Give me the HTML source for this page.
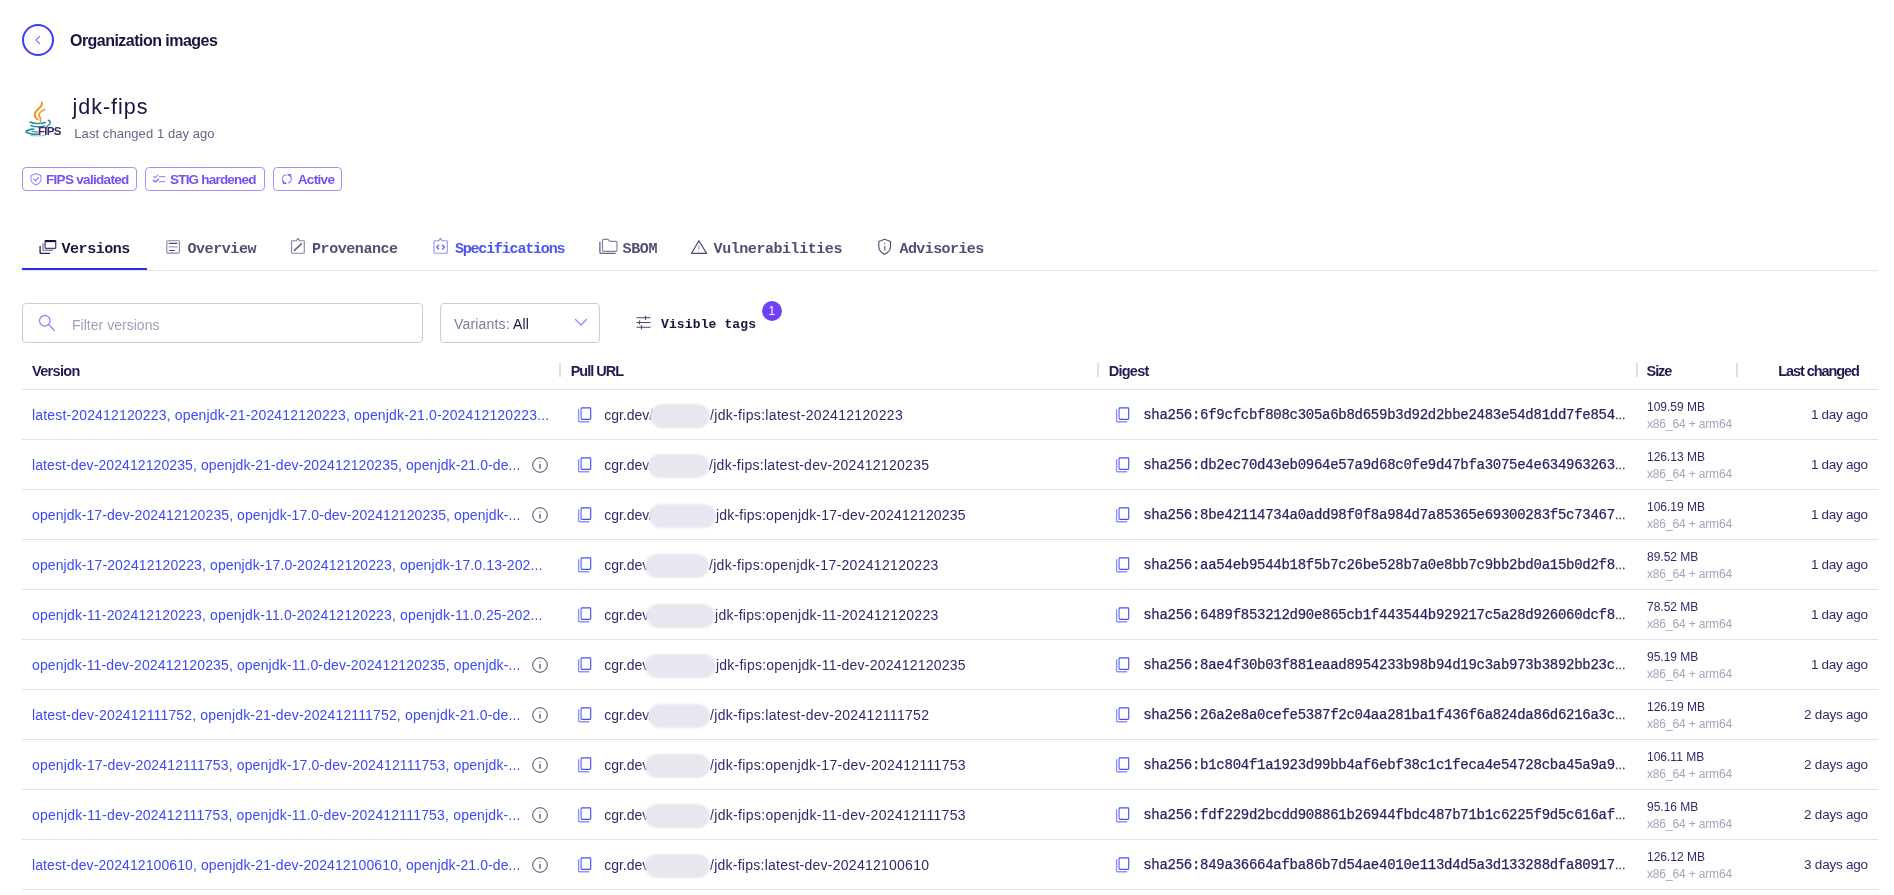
<!DOCTYPE html>
<html><head><meta charset="utf-8"><style>
html,body{margin:0;padding:0;background:#fff;}
body{width:1894px;height:895px;overflow:hidden;position:relative;font-family:'Liberation Sans', sans-serif;}
.t{position:absolute;white-space:pre;}
#w{position:absolute;left:0;top:0;width:1894px;height:895px;will-change:transform;}
svg{overflow:visible}
</style></head><body><div id="w">
<div style="position:absolute;left:22px;top:24px;width:32px;height:32px;box-sizing:border-box;border:2px solid #3a3cf6;border-radius:50%;"></div>
<svg style="position:absolute;left:32px;top:34px" width="12" height="12" viewBox="0 0 12 12" fill="none"><path d="M7.5 2.5 L4 6 L7.5 9.5" stroke="#737bf6" stroke-width="1.1" stroke-linecap="round" stroke-linejoin="round"/></svg>
<div class="t" style="left:70px;top:33.06px;font-size:16px;line-height:16px;color:#1d1240;font-weight:700;font-family:'Liberation Sans', sans-serif;letter-spacing:-0.532px;">Organization images</div>
<svg style="position:absolute;left:20px;top:96px" width="44" height="44" viewBox="0 0 44 44" fill="none">
<path d="M22 6.5 C23 10 19 12 16 15.5 C13.5 18.5 14.5 21 17.5 23.5" stroke="#f29a2e" stroke-width="2.1" fill="none" stroke-linecap="round"/>
<path d="M24.5 13.5 C21.5 15 18.5 16.5 19 19.5 C19.5 21.5 21.5 22.5 20.5 25" stroke="#f29a2e" stroke-width="1.9" fill="none" stroke-linecap="round"/>
<path d="M10 26 C13 27.8 21 28 25.5 26.5" stroke="#2a8fa6" stroke-width="1.6" fill="none" stroke-linecap="round"/>
<path d="M28.3 24.3 C31.5 25.5 30.5 28.5 26.5 30.8" stroke="#2a8fa6" stroke-width="1.5" fill="none" stroke-linecap="round"/>
<path d="M11 29.5 C14 31 20 31 24.5 30" stroke="#2a8fa6" stroke-width="1.5" fill="none" stroke-linecap="round"/>
<path d="M13.5 33.2 C10 33.5 5.5 34.5 6 35.8 C7 37.5 13 38.5 18 38.2" stroke="#2a8fa6" stroke-width="1.7" fill="none" stroke-linecap="round"/>
<path d="M12 35.5 C14 36 16 36 18 35.8" stroke="#2a8fa6" stroke-width="1.2" fill="none" stroke-linecap="round"/>
<path d="M11 39.5 C15 40 20 40 25 39.5" stroke="#7fc0cc" stroke-width="1" fill="none" stroke-linecap="round"/>
</svg>
<div class="t" style="left:38px;top:126.47px;font-size:11.5px;line-height:11.5px;color:#38286a;font-weight:700;font-family:'Liberation Sans', sans-serif;letter-spacing:-0.754px;">FIPS</div>
<div class="t" style="left:72.5px;top:97.40px;font-size:21.5px;line-height:21.5px;color:#1d1240;font-weight:400;font-family:'Liberation Sans', sans-serif;letter-spacing:0.984px;">jdk-fips</div>
<div class="t" style="left:74.3px;top:127.00px;font-size:13px;line-height:13px;color:#6a6388;font-weight:400;font-family:'Liberation Sans', sans-serif;letter-spacing:0.072px;">Last changed 1 day ago</div>
<div style="position:absolute;left:22px;top:167px;width:115px;height:24px;box-sizing:border-box;border:1px solid #a890f8;border-radius:4px;"></div>
<div class="t" style="left:46px;top:172.57px;font-size:13.5px;line-height:13.5px;color:#7450f2;font-weight:700;font-family:'Liberation Sans', sans-serif;letter-spacing:-0.691px;">FIPS validated</div>
<div style="position:absolute;left:145px;top:167px;width:120px;height:24px;box-sizing:border-box;border:1px solid #a890f8;border-radius:4px;"></div>
<div class="t" style="left:170px;top:172.57px;font-size:13.5px;line-height:13.5px;color:#7450f2;font-weight:700;font-family:'Liberation Sans', sans-serif;letter-spacing:-0.794px;">STIG hardened</div>
<div style="position:absolute;left:273px;top:167px;width:69px;height:24px;box-sizing:border-box;border:1px solid #a890f8;border-radius:4px;"></div>
<div class="t" style="left:297.7px;top:172.57px;font-size:13.5px;line-height:13.5px;color:#7450f2;font-weight:700;font-family:'Liberation Sans', sans-serif;letter-spacing:-0.646px;">Active</div>
<svg style="position:absolute;left:29px;top:172px" width="14" height="14" viewBox="0 0 14 14" fill="none"><path d="M7 1.5 L12 3.5 V7 C12 10 9.5 12 7 13 C4.5 12 2 10 2 7 V3.5 Z" stroke="#a084f8" stroke-width="1.1" stroke-linejoin="round"/><path d="M4.8 7.2 L6.5 8.8 L9.5 5.5" stroke="#8a6af6" stroke-width="1.1" stroke-linecap="round" stroke-linejoin="round"/></svg>
<svg style="position:absolute;left:152px;top:172px" width="16" height="14" viewBox="0 0 16 14" fill="none"><path d="M1.4 4.4 L3.2 5.7 L5.8 3.2" stroke="#a080f8" stroke-width="1.1" stroke-linecap="round" stroke-linejoin="round"/><path d="M1.2 8.4 L3.5 9.9 L6.5 7.3" stroke="#8a66f6" stroke-width="1.3" stroke-linecap="round" stroke-linejoin="round"/><path d="M7.4 4.6 H13 M7.4 9.6 H13" stroke="#ad95f8" stroke-width="1.1" stroke-linecap="round"/></svg>
<svg style="position:absolute;left:278px;top:170px" width="18" height="18" viewBox="0 0 18 18" fill="none"><path d="M7.9 4.9 A4.2 4.2 0 0 0 7.6 13.1" stroke="#a88cf8" stroke-width="1.2" stroke-linecap="round"/><path d="M5.2 11.2 L5.6 13.5 L8 13.2" stroke="#8060f6" stroke-width="1.3" stroke-linecap="round" stroke-linejoin="round"/><path d="M10.3 13 A4.2 4.2 0 0 0 10.3 4.9" stroke="#a88cf8" stroke-width="1.2" stroke-linecap="round"/><path d="M12.8 6.9 L12.4 4.5 L10 4.8" stroke="#8a6cf6" stroke-width="1.3" stroke-linecap="round" stroke-linejoin="round"/></svg>
<div style="position:absolute;left:22px;top:270px;width:1856px;height:1px;background:#e4e2ec;"></div>
<div style="position:absolute;left:22px;top:268px;width:125px;height:2px;background:#2433f0;"></div>
<div class="t" style="left:61.6px;top:241.81px;font-size:15px;line-height:15px;color:#1d1240;font-weight:700;font-family:'Liberation Mono', monospace;letter-spacing:-0.488px;">Versions</div>
<div class="t" style="left:187.4px;top:241.81px;font-size:15px;line-height:15px;color:#564d74;font-weight:700;font-family:'Liberation Mono', monospace;letter-spacing:-0.417px;">Overview</div>
<div class="t" style="left:312px;top:241.81px;font-size:15px;line-height:15px;color:#564d74;font-weight:700;font-family:'Liberation Mono', monospace;letter-spacing:-0.435px;">Provenance</div>
<div class="t" style="left:454.9px;top:241.81px;font-size:15px;line-height:15px;color:#4a55f3;font-weight:700;font-family:'Liberation Mono', monospace;letter-spacing:-1.187px;">Specifications</div>
<div class="t" style="left:622.6px;top:241.81px;font-size:15px;line-height:15px;color:#564d74;font-weight:700;font-family:'Liberation Mono', monospace;letter-spacing:-0.372px;">SBOM</div>
<div class="t" style="left:713.6px;top:241.81px;font-size:15px;line-height:15px;color:#564d74;font-weight:700;font-family:'Liberation Mono', monospace;letter-spacing:-0.445px;">Vulnerabilities</div>
<div class="t" style="left:899.5px;top:241.81px;font-size:15px;line-height:15px;color:#564d74;font-weight:700;font-family:'Liberation Mono', monospace;letter-spacing:-0.580px;">Advisories</div>
<svg style="position:absolute;left:36px;top:236px" width="24" height="22" viewBox="0 0 24 22" fill="none"><path d="M9.1 5 H19.7 V11.7 Q19.7 12.5 18.9 12.5 H9.9 Q9.1 12.5 9.1 11.7 Z" stroke="#4e4272" stroke-width="1.3"/><path d="M9.1 5.1 H19.7" stroke="#12073a" stroke-width="2"/><path d="M7 7.6 V13.9 Q7 14.4 7.5 14.4 H16.2" stroke="#8a80a6" stroke-width="1.3" stroke-linecap="round"/><path d="M4.1 10.3 V16.9 Q4.1 17.4 4.6 17.4 H13.5" stroke="#2a1d50" stroke-width="1.3" stroke-linecap="round"/></svg>
<svg style="position:absolute;left:162px;top:236px" width="24" height="22" viewBox="0 0 24 22" fill="none"><rect x="4.8" y="4.7" width="12.6" height="12.4" rx="1.2" stroke="#8a80a6" stroke-width="1.1"/><path d="M7.3 7.4 H15 M7.3 14.5 H12.5" stroke="#4e4470" stroke-width="1.1" stroke-linecap="round"/><path d="M7.3 10.9 H15" stroke="#a49cba" stroke-width="1.4" stroke-linecap="round"/></svg>
<svg style="position:absolute;left:286px;top:234px" width="24" height="24" viewBox="0 0 24 24" fill="none"><path d="M6.4 6.8 H10.2 L12 4.4 L13.8 6.8 H17.5 Q18.3 6.8 18.3 7.6 V18.4 Q18.3 19.2 17.5 19.2 H6.4 Q5.6 19.2 5.6 18.4 V7.6 Q5.6 6.8 6.4 6.8 Z" stroke="#8a80a6" stroke-width="1.1" stroke-linejoin="round"/><path d="M8.3 16.4 L15.5 9.7" stroke="#4e4470" stroke-width="1.3" stroke-linecap="round"/></svg>
<svg style="position:absolute;left:428px;top:234px" width="24" height="24" viewBox="0 0 24 24" fill="none"><path d="M6.8 6.8 H10.6 L12.4 4.4 L14.2 6.8 H18.5 Q19.3 6.8 19.3 7.6 V18.4 Q19.3 19.2 18.5 19.2 H6.8 Q6 19.2 6 18.4 V7.6 Q6 6.8 6.8 6.8 Z" stroke="#8c94f8" stroke-width="1.1" stroke-linejoin="round"/><path d="M10.7 11.2 L8.7 13.1 L10.7 15 M14.5 11.2 L16.5 13.1 L14.5 15" stroke="#5560f4" stroke-width="1.3" stroke-linecap="round" stroke-linejoin="round"/></svg>
<svg style="position:absolute;left:594px;top:234px" width="26" height="24" viewBox="0 0 26 24" fill="none"><path d="M8.5 6.5 Q8.5 5.4 9.6 5.4 H14 L15.8 7.3 H21.9 Q23 7.3 23 8.4 V16.2 Q23 17.3 21.9 17.3 H9.6 Q8.5 17.3 8.5 16.2 Z" stroke="#8a80a6" stroke-width="1.2" stroke-linejoin="round"/><path d="M5.9 8.2 V18.5 Q5.9 19.3 6.7 19.3 H21.2" stroke="#6a5f8c" stroke-width="1.3" stroke-linecap="round"/></svg>
<svg style="position:absolute;left:686px;top:234px" width="24" height="24" viewBox="0 0 24 24" fill="none"><path d="M12.9 6.8 L5.5 19.3 H20.5 Z" stroke="#4e4272" stroke-width="1.2" stroke-linejoin="round"/><path d="M12.8 11.3 V15.3" stroke="#9a90b4" stroke-width="1.1"/><path d="M12.3 17.4 H13.3" stroke="#9a90b4" stroke-width="1"/></svg>
<svg style="position:absolute;left:872px;top:234px" width="24" height="24" viewBox="0 0 24 24" fill="none"><path d="M12.6 5.3 L18.5 7.5 V13 C18.5 16.5 15.5 18.8 12.6 20.3 C9.7 18.8 6.8 16.5 6.8 13 V7.5 Z" stroke="#5a4f7c" stroke-width="1.2" stroke-linejoin="round"/><path d="M12.8 11.8 V16.6" stroke="#7a7096" stroke-width="1.3"/><circle cx="12.6" cy="9.4" r="0.7" fill="#7a7096"/></svg>
<div style="position:absolute;left:22px;top:303px;width:401px;height:40px;box-sizing:border-box;border:1px solid #cdc9dc;border-radius:4px;"></div>
<svg style="position:absolute;left:37px;top:313px" width="20" height="20" viewBox="0 0 20 20" fill="none"><circle cx="7.8" cy="7.8" r="5.3" stroke="#8890f8" stroke-width="1.3"/><path d="M11.8 11.8 L17.5 17.5" stroke="#8890f8" stroke-width="1.3" stroke-linecap="round"/></svg>
<div class="t" style="left:72px;top:317.65px;font-size:14px;line-height:14px;color:#a39dbb;font-weight:400;font-family:'Liberation Sans', sans-serif;letter-spacing:0.026px;">Filter versions</div>
<div style="position:absolute;left:440px;top:303px;width:160px;height:40px;box-sizing:border-box;border:1px solid #cdc9dc;border-radius:4px;"></div>
<div class="t" style="left:454px;top:317.15px;font-size:14px;line-height:14px;color:#1d1240;font-weight:400;font-family:'Liberation Sans', sans-serif;letter-spacing:0.174px;"><span style="color:#7e7899">Variants:</span> All</div>
<svg style="position:absolute;left:573px;top:316px" width="16" height="12" viewBox="0 0 16 12" fill="none"><path d="M2.5 3.5 L8 9 L13.5 3.5" stroke="#8890f8" stroke-width="1.3" stroke-linecap="round" stroke-linejoin="round"/></svg>
<svg style="position:absolute;left:635px;top:315px" width="17" height="16" viewBox="0 0 17 16" fill="none"><path d="M1.5 2.8 H15.5 M1.5 7.5 H15.5 M1.5 12.3 H15.5" stroke="#4e4470" stroke-width="1.1"/><path d="M10.5 0.8 V4.8 M4.5 5.5 V9.5 M6.5 10.3 V14.3" stroke="#4e4470" stroke-width="1.2"/></svg>
<div class="t" style="left:661px;top:317.64px;font-size:13px;line-height:13px;color:#1d1240;font-weight:700;font-family:'Liberation Mono', monospace;letter-spacing:0.125px;">Visible tags</div>
<div style="position:absolute;left:762px;top:301px;width:20px;height:20px;background:#7040f8;border-radius:50%;"></div>
<div class="t" style="left:768.6px;top:304.74px;font-size:12px;line-height:12px;color:#fff;font-weight:400;font-family:'Liberation Sans', sans-serif;font-weight:500;">1</div>
<div style="position:absolute;left:22px;top:389px;width:1856px;height:1px;background:#e3e1e8;"></div>
<div style="position:absolute;left:559px;top:363px;width:2px;height:14px;background:#e0dee8;"></div>
<div style="position:absolute;left:1097px;top:363px;width:2px;height:14px;background:#e0dee8;"></div>
<div style="position:absolute;left:1635.5px;top:363px;width:2px;height:14px;background:#e0dee8;"></div>
<div style="position:absolute;left:1736px;top:363px;width:2px;height:14px;background:#e0dee8;"></div>
<div class="t" style="left:32px;top:364.33px;font-size:14.5px;line-height:14.5px;color:#261a52;font-weight:700;font-family:'Liberation Sans', sans-serif;letter-spacing:-0.682px;">Version</div>
<div class="t" style="left:570.7px;top:364.33px;font-size:14.5px;line-height:14.5px;color:#261a52;font-weight:700;font-family:'Liberation Sans', sans-serif;letter-spacing:-1.017px;">Pull URL</div>
<div class="t" style="left:1108.7px;top:364.33px;font-size:14.5px;line-height:14.5px;color:#261a52;font-weight:700;font-family:'Liberation Sans', sans-serif;letter-spacing:-0.726px;">Digest</div>
<div class="t" style="left:1646.6px;top:364.33px;font-size:14.5px;line-height:14.5px;color:#261a52;font-weight:700;font-family:'Liberation Sans', sans-serif;letter-spacing:-1.139px;">Size</div>
<div class="t" style="left:1778.3px;top:364.33px;font-size:14.5px;line-height:14.5px;color:#261a52;font-weight:700;font-family:'Liberation Sans', sans-serif;letter-spacing:-1.088px;">Last changed</div>
<div class="t" style="left:32px;top:407.75px;font-size:14px;line-height:14px;color:#3d4af2;font-weight:400;font-family:'Liberation Sans', sans-serif;letter-spacing:0.163px;">latest-202412120223, openjdk-21-202412120223, openjdk-21.0-202412120223...</div>
<svg style="position:absolute;left:578px;top:407px" width="14" height="17" viewBox="0 0 14 17" fill="none"><path d="M0.6 2.8 V14 Q0.6 14.7 1.3 14.7 H10.7" stroke="#8e94f7" stroke-width="1.4" stroke-linecap="round"/><path d="M3.9 0.9 H12 Q12.7 0.9 12.7 1.7 V11.6 Q12.7 12.4 12 12.4 H3.9 Q3.2 12.4 3.2 11.6 V1.7 Q3.2 0.9 3.9 0.9 Z" stroke="#4452f3" stroke-width="1.15"/><path d="M3.2 2 V11.5" stroke="#9ea3f8" stroke-width="1.2"/></svg>
<div class="t" style="left:604.2px;top:407.75px;font-size:14px;line-height:14px;color:#35286a;font-weight:400;font-family:'Liberation Sans', sans-serif;">cgr.dev/</div>
<div class="t" style="left:710px;top:407.75px;font-size:14px;line-height:14px;color:#35286a;font-weight:400;font-family:'Liberation Sans', sans-serif;letter-spacing:0.322px;">/jdk-fips:latest-202412120223</div>
<div style="position:absolute;left:650px;top:403.5px;width:60px;height:24px;background:#e9e6ef;border-radius:12px;filter:blur(1.2px);"></div>
<svg style="position:absolute;left:1116px;top:407px" width="14" height="17" viewBox="0 0 14 17" fill="none"><path d="M0.6 2.8 V14 Q0.6 14.7 1.3 14.7 H10.7" stroke="#8e94f7" stroke-width="1.4" stroke-linecap="round"/><path d="M3.9 0.9 H12 Q12.7 0.9 12.7 1.7 V11.6 Q12.7 12.4 12 12.4 H3.9 Q3.2 12.4 3.2 11.6 V1.7 Q3.2 0.9 3.9 0.9 Z" stroke="#4452f3" stroke-width="1.15"/><path d="M3.2 2 V11.5" stroke="#9ea3f8" stroke-width="1.2"/></svg>
<div class="t" style="left:1143.2px;top:408.27px;font-size:14px;line-height:14px;color:#2d2260;font-weight:400;font-family:'Liberation Mono', monospace;letter-spacing:-0.270px;-webkit-text-stroke:0.25px #2d2260;">sha256:6f9cfcbf808c305a6b8d659b3d92d2bbe2483e54d81dd7fe854<span style="font-family:Liberation Sans;letter-spacing:0;font-size:11px">…</span></div>
<div class="t" style="left:1647px;top:400.74px;font-size:12px;line-height:12px;color:#35286a;font-weight:400;font-family:'Liberation Sans', sans-serif;">109.59 MB</div>
<div class="t" style="left:1647px;top:417.54px;font-size:12px;line-height:12px;color:#a7a2ba;font-weight:400;font-family:'Liberation Sans', sans-serif;letter-spacing:-0.150px;">x86_64 + arm64</div>
<div class="t" style="left:1810.9px;top:408.17px;font-size:13.5px;line-height:13.5px;color:#35286a;font-weight:400;font-family:'Liberation Sans', sans-serif;letter-spacing:-0.277px;">1 day ago</div>
<div style="position:absolute;left:22px;top:439px;width:1856px;height:1px;background:#e3e1e8;"></div>
<div class="t" style="left:32px;top:457.75px;font-size:14px;line-height:14px;color:#3d4af2;font-weight:400;font-family:'Liberation Sans', sans-serif;letter-spacing:0.093px;">latest-dev-202412120235, openjdk-21-dev-202412120235, openjdk-21.0-de...</div>
<svg style="position:absolute;left:532px;top:457px" width="16" height="16" viewBox="0 0 16 16" fill="none"><circle cx="8" cy="8" r="7.3" stroke="#4a4068" stroke-width="1"/><path d="M8 7 V11.8" stroke="#4a4068" stroke-width="1.2"/><circle cx="8" cy="4.8" r="0.6" fill="#4a4068"/></svg>
<svg style="position:absolute;left:578px;top:457px" width="14" height="17" viewBox="0 0 14 17" fill="none"><path d="M0.6 2.8 V14 Q0.6 14.7 1.3 14.7 H10.7" stroke="#8e94f7" stroke-width="1.4" stroke-linecap="round"/><path d="M3.9 0.9 H12 Q12.7 0.9 12.7 1.7 V11.6 Q12.7 12.4 12 12.4 H3.9 Q3.2 12.4 3.2 11.6 V1.7 Q3.2 0.9 3.9 0.9 Z" stroke="#4452f3" stroke-width="1.15"/><path d="M3.2 2 V11.5" stroke="#9ea3f8" stroke-width="1.2"/></svg>
<div class="t" style="left:604.2px;top:457.75px;font-size:14px;line-height:14px;color:#35286a;font-weight:400;font-family:'Liberation Sans', sans-serif;">cgr.dev/</div>
<div class="t" style="left:709px;top:457.75px;font-size:14px;line-height:14px;color:#35286a;font-weight:400;font-family:'Liberation Sans', sans-serif;letter-spacing:0.284px;">/jdk-fips:latest-dev-202412120235</div>
<div style="position:absolute;left:648px;top:453.5px;width:61px;height:24px;background:#e9e6ef;border-radius:12px;filter:blur(1.2px);"></div>
<svg style="position:absolute;left:1116px;top:457px" width="14" height="17" viewBox="0 0 14 17" fill="none"><path d="M0.6 2.8 V14 Q0.6 14.7 1.3 14.7 H10.7" stroke="#8e94f7" stroke-width="1.4" stroke-linecap="round"/><path d="M3.9 0.9 H12 Q12.7 0.9 12.7 1.7 V11.6 Q12.7 12.4 12 12.4 H3.9 Q3.2 12.4 3.2 11.6 V1.7 Q3.2 0.9 3.9 0.9 Z" stroke="#4452f3" stroke-width="1.15"/><path d="M3.2 2 V11.5" stroke="#9ea3f8" stroke-width="1.2"/></svg>
<div class="t" style="left:1143.2px;top:458.27px;font-size:14px;line-height:14px;color:#2d2260;font-weight:400;font-family:'Liberation Mono', monospace;letter-spacing:-0.270px;-webkit-text-stroke:0.25px #2d2260;">sha256:db2ec70d43eb0964e57a9d68c0fe9d47bfa3075e4e634963263<span style="font-family:Liberation Sans;letter-spacing:0;font-size:11px">…</span></div>
<div class="t" style="left:1647px;top:450.74px;font-size:12px;line-height:12px;color:#35286a;font-weight:400;font-family:'Liberation Sans', sans-serif;">126.13 MB</div>
<div class="t" style="left:1647px;top:467.54px;font-size:12px;line-height:12px;color:#a7a2ba;font-weight:400;font-family:'Liberation Sans', sans-serif;letter-spacing:-0.150px;">x86_64 + arm64</div>
<div class="t" style="left:1810.9px;top:458.17px;font-size:13.5px;line-height:13.5px;color:#35286a;font-weight:400;font-family:'Liberation Sans', sans-serif;letter-spacing:-0.277px;">1 day ago</div>
<div style="position:absolute;left:22px;top:489px;width:1856px;height:1px;background:#e3e1e8;"></div>
<div class="t" style="left:32px;top:507.75px;font-size:14px;line-height:14px;color:#3d4af2;font-weight:400;font-family:'Liberation Sans', sans-serif;letter-spacing:0.094px;">openjdk-17-dev-202412120235, openjdk-17.0-dev-202412120235, openjdk-...</div>
<svg style="position:absolute;left:532px;top:507px" width="16" height="16" viewBox="0 0 16 16" fill="none"><circle cx="8" cy="8" r="7.3" stroke="#4a4068" stroke-width="1"/><path d="M8 7 V11.8" stroke="#4a4068" stroke-width="1.2"/><circle cx="8" cy="4.8" r="0.6" fill="#4a4068"/></svg>
<svg style="position:absolute;left:578px;top:507px" width="14" height="17" viewBox="0 0 14 17" fill="none"><path d="M0.6 2.8 V14 Q0.6 14.7 1.3 14.7 H10.7" stroke="#8e94f7" stroke-width="1.4" stroke-linecap="round"/><path d="M3.9 0.9 H12 Q12.7 0.9 12.7 1.7 V11.6 Q12.7 12.4 12 12.4 H3.9 Q3.2 12.4 3.2 11.6 V1.7 Q3.2 0.9 3.9 0.9 Z" stroke="#4452f3" stroke-width="1.15"/><path d="M3.2 2 V11.5" stroke="#9ea3f8" stroke-width="1.2"/></svg>
<div class="t" style="left:604.2px;top:507.75px;font-size:14px;line-height:14px;color:#35286a;font-weight:400;font-family:'Liberation Sans', sans-serif;">cgr.dev/</div>
<div class="t" style="left:716px;top:507.75px;font-size:14px;line-height:14px;color:#35286a;font-weight:400;font-family:'Liberation Sans', sans-serif;letter-spacing:0.193px;">jdk-fips:openjdk-17-dev-202412120235</div>
<div style="position:absolute;left:649px;top:503.5px;width:67px;height:24px;background:#e9e6ef;border-radius:12px;filter:blur(1.2px);"></div>
<svg style="position:absolute;left:1116px;top:507px" width="14" height="17" viewBox="0 0 14 17" fill="none"><path d="M0.6 2.8 V14 Q0.6 14.7 1.3 14.7 H10.7" stroke="#8e94f7" stroke-width="1.4" stroke-linecap="round"/><path d="M3.9 0.9 H12 Q12.7 0.9 12.7 1.7 V11.6 Q12.7 12.4 12 12.4 H3.9 Q3.2 12.4 3.2 11.6 V1.7 Q3.2 0.9 3.9 0.9 Z" stroke="#4452f3" stroke-width="1.15"/><path d="M3.2 2 V11.5" stroke="#9ea3f8" stroke-width="1.2"/></svg>
<div class="t" style="left:1143.2px;top:508.27px;font-size:14px;line-height:14px;color:#2d2260;font-weight:400;font-family:'Liberation Mono', monospace;letter-spacing:-0.270px;-webkit-text-stroke:0.25px #2d2260;">sha256:8be42114734a0add98f0f8a984d7a85365e69300283f5c73467<span style="font-family:Liberation Sans;letter-spacing:0;font-size:11px">…</span></div>
<div class="t" style="left:1647px;top:500.74px;font-size:12px;line-height:12px;color:#35286a;font-weight:400;font-family:'Liberation Sans', sans-serif;">106.19 MB</div>
<div class="t" style="left:1647px;top:517.54px;font-size:12px;line-height:12px;color:#a7a2ba;font-weight:400;font-family:'Liberation Sans', sans-serif;letter-spacing:-0.150px;">x86_64 + arm64</div>
<div class="t" style="left:1810.9px;top:508.17px;font-size:13.5px;line-height:13.5px;color:#35286a;font-weight:400;font-family:'Liberation Sans', sans-serif;letter-spacing:-0.277px;">1 day ago</div>
<div style="position:absolute;left:22px;top:539px;width:1856px;height:1px;background:#e3e1e8;"></div>
<div class="t" style="left:32px;top:557.75px;font-size:14px;line-height:14px;color:#3d4af2;font-weight:400;font-family:'Liberation Sans', sans-serif;letter-spacing:0.114px;">openjdk-17-202412120223, openjdk-17.0-202412120223, openjdk-17.0.13-202...</div>
<svg style="position:absolute;left:578px;top:557px" width="14" height="17" viewBox="0 0 14 17" fill="none"><path d="M0.6 2.8 V14 Q0.6 14.7 1.3 14.7 H10.7" stroke="#8e94f7" stroke-width="1.4" stroke-linecap="round"/><path d="M3.9 0.9 H12 Q12.7 0.9 12.7 1.7 V11.6 Q12.7 12.4 12 12.4 H3.9 Q3.2 12.4 3.2 11.6 V1.7 Q3.2 0.9 3.9 0.9 Z" stroke="#4452f3" stroke-width="1.15"/><path d="M3.2 2 V11.5" stroke="#9ea3f8" stroke-width="1.2"/></svg>
<div class="t" style="left:604.2px;top:557.75px;font-size:14px;line-height:14px;color:#35286a;font-weight:400;font-family:'Liberation Sans', sans-serif;">cgr.dev</div>
<div class="t" style="left:709px;top:557.75px;font-size:14px;line-height:14px;color:#35286a;font-weight:400;font-family:'Liberation Sans', sans-serif;letter-spacing:0.306px;">/jdk-fips:openjdk-17-202412120223</div>
<div style="position:absolute;left:645px;top:553.5px;width:64px;height:24px;background:#e9e6ef;border-radius:12px;filter:blur(1.2px);"></div>
<svg style="position:absolute;left:1116px;top:557px" width="14" height="17" viewBox="0 0 14 17" fill="none"><path d="M0.6 2.8 V14 Q0.6 14.7 1.3 14.7 H10.7" stroke="#8e94f7" stroke-width="1.4" stroke-linecap="round"/><path d="M3.9 0.9 H12 Q12.7 0.9 12.7 1.7 V11.6 Q12.7 12.4 12 12.4 H3.9 Q3.2 12.4 3.2 11.6 V1.7 Q3.2 0.9 3.9 0.9 Z" stroke="#4452f3" stroke-width="1.15"/><path d="M3.2 2 V11.5" stroke="#9ea3f8" stroke-width="1.2"/></svg>
<div class="t" style="left:1143.2px;top:558.27px;font-size:14px;line-height:14px;color:#2d2260;font-weight:400;font-family:'Liberation Mono', monospace;letter-spacing:-0.270px;-webkit-text-stroke:0.25px #2d2260;">sha256:aa54eb9544b18f5b7c26be528b7a0e8bb7c9bb2bd0a15b0d2f8<span style="font-family:Liberation Sans;letter-spacing:0;font-size:11px">…</span></div>
<div class="t" style="left:1647px;top:550.74px;font-size:12px;line-height:12px;color:#35286a;font-weight:400;font-family:'Liberation Sans', sans-serif;">89.52 MB</div>
<div class="t" style="left:1647px;top:567.54px;font-size:12px;line-height:12px;color:#a7a2ba;font-weight:400;font-family:'Liberation Sans', sans-serif;letter-spacing:-0.150px;">x86_64 + arm64</div>
<div class="t" style="left:1810.9px;top:558.17px;font-size:13.5px;line-height:13.5px;color:#35286a;font-weight:400;font-family:'Liberation Sans', sans-serif;letter-spacing:-0.277px;">1 day ago</div>
<div style="position:absolute;left:22px;top:589px;width:1856px;height:1px;background:#e3e1e8;"></div>
<div class="t" style="left:32px;top:607.75px;font-size:14px;line-height:14px;color:#3d4af2;font-weight:400;font-family:'Liberation Sans', sans-serif;letter-spacing:0.157px;">openjdk-11-202412120223, openjdk-11.0-202412120223, openjdk-11.0.25-202...</div>
<svg style="position:absolute;left:578px;top:607px" width="14" height="17" viewBox="0 0 14 17" fill="none"><path d="M0.6 2.8 V14 Q0.6 14.7 1.3 14.7 H10.7" stroke="#8e94f7" stroke-width="1.4" stroke-linecap="round"/><path d="M3.9 0.9 H12 Q12.7 0.9 12.7 1.7 V11.6 Q12.7 12.4 12 12.4 H3.9 Q3.2 12.4 3.2 11.6 V1.7 Q3.2 0.9 3.9 0.9 Z" stroke="#4452f3" stroke-width="1.15"/><path d="M3.2 2 V11.5" stroke="#9ea3f8" stroke-width="1.2"/></svg>
<div class="t" style="left:604.2px;top:607.75px;font-size:14px;line-height:14px;color:#35286a;font-weight:400;font-family:'Liberation Sans', sans-serif;">cgr.dev</div>
<div class="t" style="left:715px;top:607.75px;font-size:14px;line-height:14px;color:#35286a;font-weight:400;font-family:'Liberation Sans', sans-serif;letter-spacing:0.281px;">jdk-fips:openjdk-11-202412120223</div>
<div style="position:absolute;left:646px;top:603.5px;width:69px;height:24px;background:#e9e6ef;border-radius:12px;filter:blur(1.2px);"></div>
<svg style="position:absolute;left:1116px;top:607px" width="14" height="17" viewBox="0 0 14 17" fill="none"><path d="M0.6 2.8 V14 Q0.6 14.7 1.3 14.7 H10.7" stroke="#8e94f7" stroke-width="1.4" stroke-linecap="round"/><path d="M3.9 0.9 H12 Q12.7 0.9 12.7 1.7 V11.6 Q12.7 12.4 12 12.4 H3.9 Q3.2 12.4 3.2 11.6 V1.7 Q3.2 0.9 3.9 0.9 Z" stroke="#4452f3" stroke-width="1.15"/><path d="M3.2 2 V11.5" stroke="#9ea3f8" stroke-width="1.2"/></svg>
<div class="t" style="left:1143.2px;top:608.27px;font-size:14px;line-height:14px;color:#2d2260;font-weight:400;font-family:'Liberation Mono', monospace;letter-spacing:-0.270px;-webkit-text-stroke:0.25px #2d2260;">sha256:6489f853212d90e865cb1f443544b929217c5a28d926060dcf8<span style="font-family:Liberation Sans;letter-spacing:0;font-size:11px">…</span></div>
<div class="t" style="left:1647px;top:600.74px;font-size:12px;line-height:12px;color:#35286a;font-weight:400;font-family:'Liberation Sans', sans-serif;">78.52 MB</div>
<div class="t" style="left:1647px;top:617.54px;font-size:12px;line-height:12px;color:#a7a2ba;font-weight:400;font-family:'Liberation Sans', sans-serif;letter-spacing:-0.150px;">x86_64 + arm64</div>
<div class="t" style="left:1810.9px;top:608.17px;font-size:13.5px;line-height:13.5px;color:#35286a;font-weight:400;font-family:'Liberation Sans', sans-serif;letter-spacing:-0.277px;">1 day ago</div>
<div style="position:absolute;left:22px;top:639px;width:1856px;height:1px;background:#e3e1e8;"></div>
<div class="t" style="left:32px;top:657.75px;font-size:14px;line-height:14px;color:#3d4af2;font-weight:400;font-family:'Liberation Sans', sans-serif;letter-spacing:0.124px;">openjdk-11-dev-202412120235, openjdk-11.0-dev-202412120235, openjdk-...</div>
<svg style="position:absolute;left:532px;top:657px" width="16" height="16" viewBox="0 0 16 16" fill="none"><circle cx="8" cy="8" r="7.3" stroke="#4a4068" stroke-width="1"/><path d="M8 7 V11.8" stroke="#4a4068" stroke-width="1.2"/><circle cx="8" cy="4.8" r="0.6" fill="#4a4068"/></svg>
<svg style="position:absolute;left:578px;top:657px" width="14" height="17" viewBox="0 0 14 17" fill="none"><path d="M0.6 2.8 V14 Q0.6 14.7 1.3 14.7 H10.7" stroke="#8e94f7" stroke-width="1.4" stroke-linecap="round"/><path d="M3.9 0.9 H12 Q12.7 0.9 12.7 1.7 V11.6 Q12.7 12.4 12 12.4 H3.9 Q3.2 12.4 3.2 11.6 V1.7 Q3.2 0.9 3.9 0.9 Z" stroke="#4452f3" stroke-width="1.15"/><path d="M3.2 2 V11.5" stroke="#9ea3f8" stroke-width="1.2"/></svg>
<div class="t" style="left:604.2px;top:657.75px;font-size:14px;line-height:14px;color:#35286a;font-weight:400;font-family:'Liberation Sans', sans-serif;">cgr.dev</div>
<div class="t" style="left:716px;top:657.75px;font-size:14px;line-height:14px;color:#35286a;font-weight:400;font-family:'Liberation Sans', sans-serif;letter-spacing:0.223px;">jdk-fips:openjdk-11-dev-202412120235</div>
<div style="position:absolute;left:645px;top:653.5px;width:71px;height:24px;background:#e9e6ef;border-radius:12px;filter:blur(1.2px);"></div>
<svg style="position:absolute;left:1116px;top:657px" width="14" height="17" viewBox="0 0 14 17" fill="none"><path d="M0.6 2.8 V14 Q0.6 14.7 1.3 14.7 H10.7" stroke="#8e94f7" stroke-width="1.4" stroke-linecap="round"/><path d="M3.9 0.9 H12 Q12.7 0.9 12.7 1.7 V11.6 Q12.7 12.4 12 12.4 H3.9 Q3.2 12.4 3.2 11.6 V1.7 Q3.2 0.9 3.9 0.9 Z" stroke="#4452f3" stroke-width="1.15"/><path d="M3.2 2 V11.5" stroke="#9ea3f8" stroke-width="1.2"/></svg>
<div class="t" style="left:1143.2px;top:658.27px;font-size:14px;line-height:14px;color:#2d2260;font-weight:400;font-family:'Liberation Mono', monospace;letter-spacing:-0.270px;-webkit-text-stroke:0.25px #2d2260;">sha256:8ae4f30b03f881eaad8954233b98b94d19c3ab973b3892bb23c<span style="font-family:Liberation Sans;letter-spacing:0;font-size:11px">…</span></div>
<div class="t" style="left:1647px;top:650.74px;font-size:12px;line-height:12px;color:#35286a;font-weight:400;font-family:'Liberation Sans', sans-serif;">95.19 MB</div>
<div class="t" style="left:1647px;top:667.54px;font-size:12px;line-height:12px;color:#a7a2ba;font-weight:400;font-family:'Liberation Sans', sans-serif;letter-spacing:-0.150px;">x86_64 + arm64</div>
<div class="t" style="left:1810.9px;top:658.17px;font-size:13.5px;line-height:13.5px;color:#35286a;font-weight:400;font-family:'Liberation Sans', sans-serif;letter-spacing:-0.277px;">1 day ago</div>
<div style="position:absolute;left:22px;top:689px;width:1856px;height:1px;background:#e3e1e8;"></div>
<div class="t" style="left:32px;top:707.75px;font-size:14px;line-height:14px;color:#3d4af2;font-weight:400;font-family:'Liberation Sans', sans-serif;letter-spacing:0.151px;">latest-dev-202412111752, openjdk-21-dev-202412111752, openjdk-21.0-de...</div>
<svg style="position:absolute;left:532px;top:707px" width="16" height="16" viewBox="0 0 16 16" fill="none"><circle cx="8" cy="8" r="7.3" stroke="#4a4068" stroke-width="1"/><path d="M8 7 V11.8" stroke="#4a4068" stroke-width="1.2"/><circle cx="8" cy="4.8" r="0.6" fill="#4a4068"/></svg>
<svg style="position:absolute;left:578px;top:707px" width="14" height="17" viewBox="0 0 14 17" fill="none"><path d="M0.6 2.8 V14 Q0.6 14.7 1.3 14.7 H10.7" stroke="#8e94f7" stroke-width="1.4" stroke-linecap="round"/><path d="M3.9 0.9 H12 Q12.7 0.9 12.7 1.7 V11.6 Q12.7 12.4 12 12.4 H3.9 Q3.2 12.4 3.2 11.6 V1.7 Q3.2 0.9 3.9 0.9 Z" stroke="#4452f3" stroke-width="1.15"/><path d="M3.2 2 V11.5" stroke="#9ea3f8" stroke-width="1.2"/></svg>
<div class="t" style="left:604.2px;top:707.75px;font-size:14px;line-height:14px;color:#35286a;font-weight:400;font-family:'Liberation Sans', sans-serif;">cgr.dev/</div>
<div class="t" style="left:710px;top:707.75px;font-size:14px;line-height:14px;color:#35286a;font-weight:400;font-family:'Liberation Sans', sans-serif;letter-spacing:0.317px;">/jdk-fips:latest-dev-202412111752</div>
<div style="position:absolute;left:648px;top:703.5px;width:62px;height:24px;background:#e9e6ef;border-radius:12px;filter:blur(1.2px);"></div>
<svg style="position:absolute;left:1116px;top:707px" width="14" height="17" viewBox="0 0 14 17" fill="none"><path d="M0.6 2.8 V14 Q0.6 14.7 1.3 14.7 H10.7" stroke="#8e94f7" stroke-width="1.4" stroke-linecap="round"/><path d="M3.9 0.9 H12 Q12.7 0.9 12.7 1.7 V11.6 Q12.7 12.4 12 12.4 H3.9 Q3.2 12.4 3.2 11.6 V1.7 Q3.2 0.9 3.9 0.9 Z" stroke="#4452f3" stroke-width="1.15"/><path d="M3.2 2 V11.5" stroke="#9ea3f8" stroke-width="1.2"/></svg>
<div class="t" style="left:1143.2px;top:708.27px;font-size:14px;line-height:14px;color:#2d2260;font-weight:400;font-family:'Liberation Mono', monospace;letter-spacing:-0.270px;-webkit-text-stroke:0.25px #2d2260;">sha256:26a2e8a0cefe5387f2c04aa281ba1f436f6a824da86d6216a3c<span style="font-family:Liberation Sans;letter-spacing:0;font-size:11px">…</span></div>
<div class="t" style="left:1647px;top:700.74px;font-size:12px;line-height:12px;color:#35286a;font-weight:400;font-family:'Liberation Sans', sans-serif;">126.19 MB</div>
<div class="t" style="left:1647px;top:717.54px;font-size:12px;line-height:12px;color:#a7a2ba;font-weight:400;font-family:'Liberation Sans', sans-serif;letter-spacing:-0.150px;">x86_64 + arm64</div>
<div class="t" style="left:1804.1px;top:708.17px;font-size:13.5px;line-height:13.5px;color:#35286a;font-weight:400;font-family:'Liberation Sans', sans-serif;letter-spacing:-0.240px;">2 days ago</div>
<div style="position:absolute;left:22px;top:739px;width:1856px;height:1px;background:#e3e1e8;"></div>
<div class="t" style="left:32px;top:757.75px;font-size:14px;line-height:14px;color:#3d4af2;font-weight:400;font-family:'Liberation Sans', sans-serif;letter-spacing:0.153px;">openjdk-17-dev-202412111753, openjdk-17.0-dev-202412111753, openjdk-...</div>
<svg style="position:absolute;left:532px;top:757px" width="16" height="16" viewBox="0 0 16 16" fill="none"><circle cx="8" cy="8" r="7.3" stroke="#4a4068" stroke-width="1"/><path d="M8 7 V11.8" stroke="#4a4068" stroke-width="1.2"/><circle cx="8" cy="4.8" r="0.6" fill="#4a4068"/></svg>
<svg style="position:absolute;left:578px;top:757px" width="14" height="17" viewBox="0 0 14 17" fill="none"><path d="M0.6 2.8 V14 Q0.6 14.7 1.3 14.7 H10.7" stroke="#8e94f7" stroke-width="1.4" stroke-linecap="round"/><path d="M3.9 0.9 H12 Q12.7 0.9 12.7 1.7 V11.6 Q12.7 12.4 12 12.4 H3.9 Q3.2 12.4 3.2 11.6 V1.7 Q3.2 0.9 3.9 0.9 Z" stroke="#4452f3" stroke-width="1.15"/><path d="M3.2 2 V11.5" stroke="#9ea3f8" stroke-width="1.2"/></svg>
<div class="t" style="left:604.2px;top:757.75px;font-size:14px;line-height:14px;color:#35286a;font-weight:400;font-family:'Liberation Sans', sans-serif;">cgr.dev</div>
<div class="t" style="left:710px;top:757.75px;font-size:14px;line-height:14px;color:#35286a;font-weight:400;font-family:'Liberation Sans', sans-serif;letter-spacing:0.304px;">/jdk-fips:openjdk-17-dev-202412111753</div>
<div style="position:absolute;left:645px;top:753.5px;width:65px;height:24px;background:#e9e6ef;border-radius:12px;filter:blur(1.2px);"></div>
<svg style="position:absolute;left:1116px;top:757px" width="14" height="17" viewBox="0 0 14 17" fill="none"><path d="M0.6 2.8 V14 Q0.6 14.7 1.3 14.7 H10.7" stroke="#8e94f7" stroke-width="1.4" stroke-linecap="round"/><path d="M3.9 0.9 H12 Q12.7 0.9 12.7 1.7 V11.6 Q12.7 12.4 12 12.4 H3.9 Q3.2 12.4 3.2 11.6 V1.7 Q3.2 0.9 3.9 0.9 Z" stroke="#4452f3" stroke-width="1.15"/><path d="M3.2 2 V11.5" stroke="#9ea3f8" stroke-width="1.2"/></svg>
<div class="t" style="left:1143.2px;top:758.27px;font-size:14px;line-height:14px;color:#2d2260;font-weight:400;font-family:'Liberation Mono', monospace;letter-spacing:-0.270px;-webkit-text-stroke:0.25px #2d2260;">sha256:b1c804f1a1923d99bb4af6ebf38c1c1feca4e54728cba45a9a9<span style="font-family:Liberation Sans;letter-spacing:0;font-size:11px">…</span></div>
<div class="t" style="left:1647px;top:750.74px;font-size:12px;line-height:12px;color:#35286a;font-weight:400;font-family:'Liberation Sans', sans-serif;">106.11 MB</div>
<div class="t" style="left:1647px;top:767.54px;font-size:12px;line-height:12px;color:#a7a2ba;font-weight:400;font-family:'Liberation Sans', sans-serif;letter-spacing:-0.150px;">x86_64 + arm64</div>
<div class="t" style="left:1804.1px;top:758.17px;font-size:13.5px;line-height:13.5px;color:#35286a;font-weight:400;font-family:'Liberation Sans', sans-serif;letter-spacing:-0.240px;">2 days ago</div>
<div style="position:absolute;left:22px;top:789px;width:1856px;height:1px;background:#e3e1e8;"></div>
<div class="t" style="left:32px;top:807.75px;font-size:14px;line-height:14px;color:#3d4af2;font-weight:400;font-family:'Liberation Sans', sans-serif;letter-spacing:0.183px;">openjdk-11-dev-202412111753, openjdk-11.0-dev-202412111753, openjdk-...</div>
<svg style="position:absolute;left:532px;top:807px" width="16" height="16" viewBox="0 0 16 16" fill="none"><circle cx="8" cy="8" r="7.3" stroke="#4a4068" stroke-width="1"/><path d="M8 7 V11.8" stroke="#4a4068" stroke-width="1.2"/><circle cx="8" cy="4.8" r="0.6" fill="#4a4068"/></svg>
<svg style="position:absolute;left:578px;top:807px" width="14" height="17" viewBox="0 0 14 17" fill="none"><path d="M0.6 2.8 V14 Q0.6 14.7 1.3 14.7 H10.7" stroke="#8e94f7" stroke-width="1.4" stroke-linecap="round"/><path d="M3.9 0.9 H12 Q12.7 0.9 12.7 1.7 V11.6 Q12.7 12.4 12 12.4 H3.9 Q3.2 12.4 3.2 11.6 V1.7 Q3.2 0.9 3.9 0.9 Z" stroke="#4452f3" stroke-width="1.15"/><path d="M3.2 2 V11.5" stroke="#9ea3f8" stroke-width="1.2"/></svg>
<div class="t" style="left:604.2px;top:807.75px;font-size:14px;line-height:14px;color:#35286a;font-weight:400;font-family:'Liberation Sans', sans-serif;">cgr.dev</div>
<div class="t" style="left:710px;top:807.75px;font-size:14px;line-height:14px;color:#35286a;font-weight:400;font-family:'Liberation Sans', sans-serif;letter-spacing:0.333px;">/jdk-fips:openjdk-11-dev-202412111753</div>
<div style="position:absolute;left:645px;top:803.5px;width:65px;height:24px;background:#e9e6ef;border-radius:12px;filter:blur(1.2px);"></div>
<svg style="position:absolute;left:1116px;top:807px" width="14" height="17" viewBox="0 0 14 17" fill="none"><path d="M0.6 2.8 V14 Q0.6 14.7 1.3 14.7 H10.7" stroke="#8e94f7" stroke-width="1.4" stroke-linecap="round"/><path d="M3.9 0.9 H12 Q12.7 0.9 12.7 1.7 V11.6 Q12.7 12.4 12 12.4 H3.9 Q3.2 12.4 3.2 11.6 V1.7 Q3.2 0.9 3.9 0.9 Z" stroke="#4452f3" stroke-width="1.15"/><path d="M3.2 2 V11.5" stroke="#9ea3f8" stroke-width="1.2"/></svg>
<div class="t" style="left:1143.2px;top:808.27px;font-size:14px;line-height:14px;color:#2d2260;font-weight:400;font-family:'Liberation Mono', monospace;letter-spacing:-0.270px;-webkit-text-stroke:0.25px #2d2260;">sha256:fdf229d2bcdd908861b26944fbdc487b71b1c6225f9d5c616af<span style="font-family:Liberation Sans;letter-spacing:0;font-size:11px">…</span></div>
<div class="t" style="left:1647px;top:800.74px;font-size:12px;line-height:12px;color:#35286a;font-weight:400;font-family:'Liberation Sans', sans-serif;">95.16 MB</div>
<div class="t" style="left:1647px;top:817.54px;font-size:12px;line-height:12px;color:#a7a2ba;font-weight:400;font-family:'Liberation Sans', sans-serif;letter-spacing:-0.150px;">x86_64 + arm64</div>
<div class="t" style="left:1804.1px;top:808.17px;font-size:13.5px;line-height:13.5px;color:#35286a;font-weight:400;font-family:'Liberation Sans', sans-serif;letter-spacing:-0.240px;">2 days ago</div>
<div style="position:absolute;left:22px;top:839px;width:1856px;height:1px;background:#e3e1e8;"></div>
<div class="t" style="left:32px;top:857.75px;font-size:14px;line-height:14px;color:#3d4af2;font-weight:400;font-family:'Liberation Sans', sans-serif;letter-spacing:0.093px;">latest-dev-202412100610, openjdk-21-dev-202412100610, openjdk-21.0-de...</div>
<svg style="position:absolute;left:532px;top:857px" width="16" height="16" viewBox="0 0 16 16" fill="none"><circle cx="8" cy="8" r="7.3" stroke="#4a4068" stroke-width="1"/><path d="M8 7 V11.8" stroke="#4a4068" stroke-width="1.2"/><circle cx="8" cy="4.8" r="0.6" fill="#4a4068"/></svg>
<svg style="position:absolute;left:578px;top:857px" width="14" height="17" viewBox="0 0 14 17" fill="none"><path d="M0.6 2.8 V14 Q0.6 14.7 1.3 14.7 H10.7" stroke="#8e94f7" stroke-width="1.4" stroke-linecap="round"/><path d="M3.9 0.9 H12 Q12.7 0.9 12.7 1.7 V11.6 Q12.7 12.4 12 12.4 H3.9 Q3.2 12.4 3.2 11.6 V1.7 Q3.2 0.9 3.9 0.9 Z" stroke="#4452f3" stroke-width="1.15"/><path d="M3.2 2 V11.5" stroke="#9ea3f8" stroke-width="1.2"/></svg>
<div class="t" style="left:604.2px;top:857.75px;font-size:14px;line-height:14px;color:#35286a;font-weight:400;font-family:'Liberation Sans', sans-serif;">cgr.dev</div>
<div class="t" style="left:710px;top:857.75px;font-size:14px;line-height:14px;color:#35286a;font-weight:400;font-family:'Liberation Sans', sans-serif;letter-spacing:0.252px;">/jdk-fips:latest-dev-202412100610</div>
<div style="position:absolute;left:645px;top:853.5px;width:65px;height:24px;background:#e9e6ef;border-radius:12px;filter:blur(1.2px);"></div>
<svg style="position:absolute;left:1116px;top:857px" width="14" height="17" viewBox="0 0 14 17" fill="none"><path d="M0.6 2.8 V14 Q0.6 14.7 1.3 14.7 H10.7" stroke="#8e94f7" stroke-width="1.4" stroke-linecap="round"/><path d="M3.9 0.9 H12 Q12.7 0.9 12.7 1.7 V11.6 Q12.7 12.4 12 12.4 H3.9 Q3.2 12.4 3.2 11.6 V1.7 Q3.2 0.9 3.9 0.9 Z" stroke="#4452f3" stroke-width="1.15"/><path d="M3.2 2 V11.5" stroke="#9ea3f8" stroke-width="1.2"/></svg>
<div class="t" style="left:1143.2px;top:858.27px;font-size:14px;line-height:14px;color:#2d2260;font-weight:400;font-family:'Liberation Mono', monospace;letter-spacing:-0.270px;-webkit-text-stroke:0.25px #2d2260;">sha256:849a36664afba86b7d54ae4010e113d4d5a3d133288dfa80917<span style="font-family:Liberation Sans;letter-spacing:0;font-size:11px">…</span></div>
<div class="t" style="left:1647px;top:850.74px;font-size:12px;line-height:12px;color:#35286a;font-weight:400;font-family:'Liberation Sans', sans-serif;">126.12 MB</div>
<div class="t" style="left:1647px;top:867.54px;font-size:12px;line-height:12px;color:#a7a2ba;font-weight:400;font-family:'Liberation Sans', sans-serif;letter-spacing:-0.150px;">x86_64 + arm64</div>
<div class="t" style="left:1804.1px;top:858.17px;font-size:13.5px;line-height:13.5px;color:#35286a;font-weight:400;font-family:'Liberation Sans', sans-serif;letter-spacing:-0.240px;">3 days ago</div>
<div style="position:absolute;left:22px;top:889px;width:1856px;height:1px;background:#e3e1e8;"></div>
</div></body></html>
